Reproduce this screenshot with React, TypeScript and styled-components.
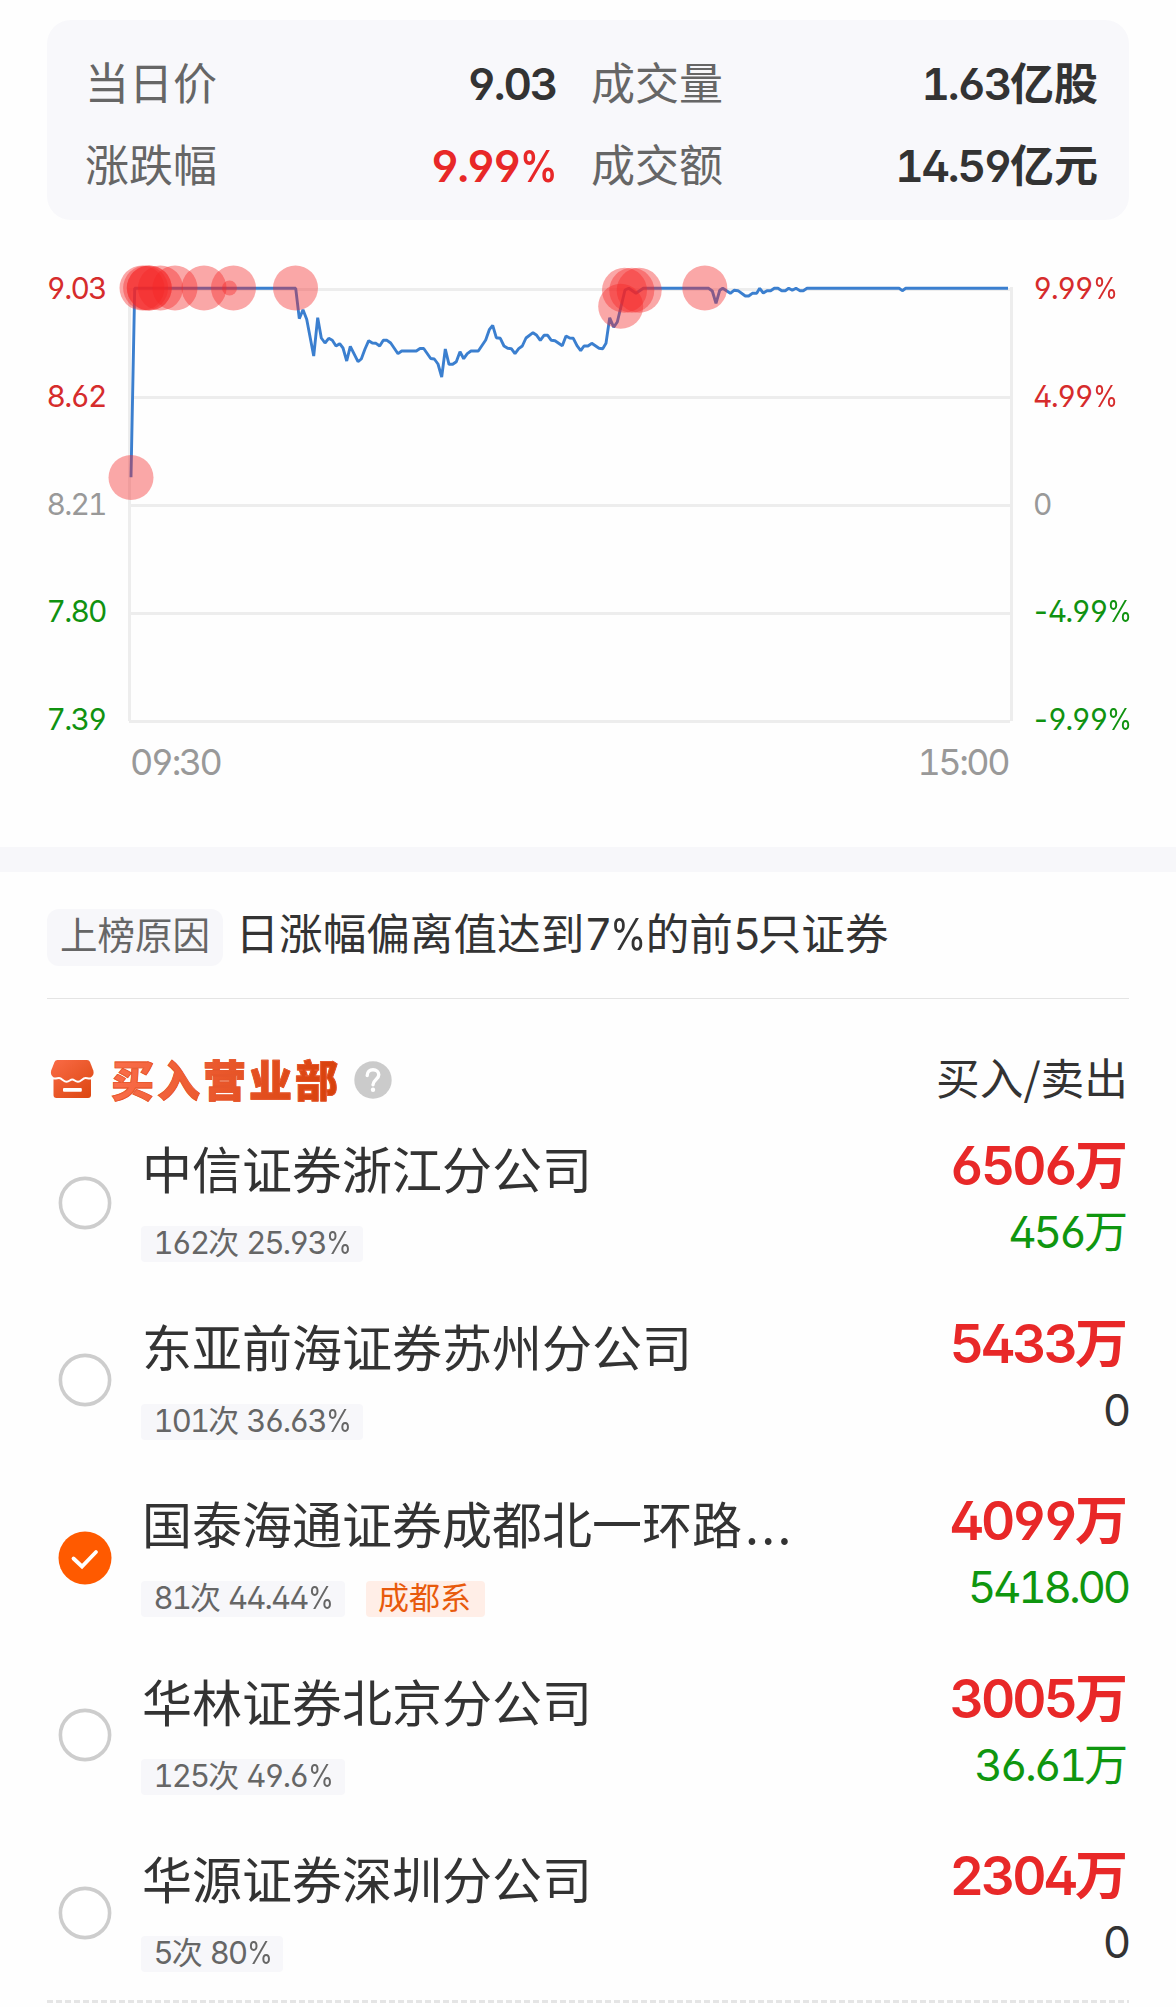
import React from "react";
import styled, { createGlobalStyle } from "styled-components";

const RED = "#e82828";
const GREEN = "#0f960f";
const INK = "#333333";
const MUTED = "#666666";
const FAINT = "#999999";

const GlobalStyle = createGlobalStyle`
  * { box-sizing: border-box; }
  body {
    margin: 0;
    background: #fdfdfe;
    font-family: "Noto Sans CJK SC", sans-serif;
    color: ${INK};
  }
`;

const Page = styled.main`
  width: 1176px;
  height: 2007px;
  overflow: hidden;
  display: flex;
  flex-direction: column;
  background: #fefefe;

  > * {
    flex: none;
  }
`;

const Latin = styled.span`
  font-family: "Inter", "Noto Sans CJK SC", sans-serif;
  font-feature-settings: "tnum", "cv02", "cv03", "cv04";
  letter-spacing: -0.06em;
`;

const Minus = styled(Latin)`
  margin: 0 -0.04em 0 -0.06em;
`;

const Percent = styled(Latin)`
  display: inline-block;
  letter-spacing: 0;
  transform: scaleX(0.85);
  transform-origin: 0 50%;
  margin: 0 -0.14em 0 0.02em;
`;

/* Figures use a latin face, the rest keeps the Chinese one. */
function Mixed({ text }: { text: string }) {
  const parts = text.split(/([0-9.:]+|%|-)/).filter(Boolean);
  return (
    <>
      {parts.map((part, i) => {
        if (part === "%") return <Percent key={i}>%</Percent>;
        if (part === "-") return <Minus key={i}>-</Minus>;
        return /^[0-9.:]/.test(part) ? <Latin key={i}>{part}</Latin> : part;
      })}
    </>
  );
}

const Summary = styled.section`
  margin: 20px 47px 0;
  height: 200px;
  padding: 20px 31px 0 38px;
  border-radius: 24px;
  background: #f8f8fb;
  display: grid;
  grid-template-columns: 471px 507px;
  column-gap: 35px;
  grid-auto-rows: 82px;
  font-size: 44px;
  line-height: 82px;
`;

const Stat = styled.div`
  display: flex;
  justify-content: space-between;
  white-space: nowrap;
`;

const StatLabel = styled.span`
  color: ${MUTED};
`;

const StatValue = styled.span<{ $color?: string }>`
  font-weight: 600;
  color: ${(p) => p.$color ?? INK};

  ${Latin} {
    letter-spacing: -0.05em;
  }

  ${Percent} {
    letter-spacing: 0;
    margin-right: -0.19em;
  }
`;

const ChartArea = styled.section`
  margin: 50px 0 0 47px;
  height: 467px;
  display: grid;
  grid-template-columns: 81px 886px 115px;
`;

const Scale = styled.div<{ $inset?: number }>`
  display: flex;
  flex-direction: column;
  justify-content: space-between;
  margin: -2px 0 0 -0.5px;
  padding-left: ${(p) => p.$inset ?? 0}px;
  font-size: 30px;
  line-height: 36px;
  white-space: nowrap;
`;

const Tick = styled.span<{ $color: string }>`
  color: ${(p) => p.$color};
`;

const Plot = styled.svg`
  display: block;
  overflow: visible;
`;

const TimeAxis = styled.div`
  margin: 1px 168px 0 130px;
  height: 109px;
  display: flex;
  justify-content: space-between;
  font-size: 36px;
  line-height: 48px;
  color: ${FAINT};

  ${Latin} {
    letter-spacing: -0.07em;
  }
`;

const Band = styled.div`
  height: 25px;
  background: #f7f7fa;
`;

const Reason = styled.section`
  margin: 0 47px;
  height: 127px;
  padding-top: 37px;
  display: flex;
  align-items: flex-start;
  border-bottom: 1px solid #e4e4e4;
`;

const ReasonTag = styled.span`
  width: 176px;
  height: 57px;
  border-radius: 12px;
  background: #f7f7fa;
  color: ${MUTED};
  font-size: 37.5px;
  line-height: 48px;
  text-align: center;
`;

const ReasonText = styled.span`
  margin-left: 12.5px;
  font-size: 43.6px;
  line-height: 45px;
  white-space: nowrap;

  ${Latin} {
    letter-spacing: -0.08em;
  }

  ${Percent} {
    letter-spacing: 0;
    margin-right: -0.16em;
  }
`;

const ListHeader = styled.header`
  margin: 0 47px;
  height: 130px;
  padding-top: 30px;
  display: flex;
  align-items: center;
`;

const Title = styled.h2`
  margin: -2px 0 0 14px;
  font-size: 43px;
  line-height: 50px;
  letter-spacing: 3px;
  font-weight: 900;
  color: transparent;
  -webkit-text-stroke: 0.8px #e6552a;
  background: linear-gradient(100deg, #fb6e4b, #d63f08);
  background-clip: text;
  -webkit-background-clip: text;
`;

const Help = styled.svg`
  margin: 2px 0 0 13px;
`;

const Columns = styled.span`
  margin: -6px 0 0 auto;
  padding-right: 1px;
  font-size: 43.7px;
  line-height: 50px;
`;

const List = styled.section`
  margin: 0 47px;
  display: flex;
  flex-direction: column;
  gap: 17px;
`;

const Row = styled.article`
  height: 160.5px;
  display: grid;
  grid-template-columns: 94px 1fr auto;
`;

const Check = styled.svg`
  margin: 46.5px 0 0 10.5px;
`;

const Branch = styled.div`
  display: flex;
  flex-direction: column;
`;

const Name = styled.span`
  margin: 8px 0 0 1px;
  font-size: 50px;
  line-height: 60px;
  white-space: nowrap;
`;

const Dots = styled.span`
  margin-left: 3px;
  letter-spacing: 2.3px;
`;

const Tags = styled.div`
  margin-top: 29px;
  display: flex;
  gap: 21px;
`;

const Tag = styled.span<{ $hot?: boolean }>`
  height: 36px;
  padding: 0 ${(p) => (p.$hot ? 14 : 10.5)}px 0 ${(p) => (p.$hot ? 12.5 : 12.5)}px;
  border-radius: 4px;
  font-size: 31px;
  line-height: 30px;
  white-space: nowrap;
  background: ${(p) => (p.$hot ? "#ffeee7" : "#f7f7fa")};
  color: ${(p) => (p.$hot ? "#e85a0c" : MUTED)};
`;

const Amounts = styled.div`
  display: flex;
  flex-direction: column;
  align-items: flex-end;
  padding-right: 1px;
`;

const Buy = styled.span`
  margin-top: 2px;
  font-size: 53px;
  line-height: 62px;
  font-weight: 600;
  color: ${RED};

  ${Latin} {
    letter-spacing: -0.056em;
  }
`;

const Sell = styled.span<{ $zero: boolean }>`
  margin-top: 5px;
  font-size: 44px;
  line-height: 54px;
  color: ${(p) => (p.$zero ? INK : GREEN)};

  ${Latin} {
    letter-spacing: -0.074em;
  }
`;

const Dashes = styled.div`
  margin: 0.5px 47px 0;
  height: 3px;
  background: repeating-linear-gradient(90deg, #e5e5e5 0 6px, transparent 6px 9px);
`;

const stats = [
  { label: "当日价", value: "9.03" },
  { label: "成交量", value: "1.63亿股" },
  { label: "涨跌幅", value: "9.99%", color: RED },
  { label: "成交额", value: "14.59亿元" },
];

const tickColors = ["#d62c2c", "#d62c2c", FAINT, "#109210", "#109210"];
const prices = ["9.03", "8.62", "8.21", "7.80", "7.39"];
const percents = ["9.99%", "4.99%", "0", "-4.99%", "-9.99%"];

const priceLine =
  "131,477.3 134.7,288.3 295.7,288.3 299.3,318.7 303,309.7 306.7,319.3 313.7,356 317.7,317.7 321.3,338 325,343 328.7,338.3 332.3,340.3 336,346 339.7,343.7 343,348 346.7,361 350.3,346.3 358,361.7 361.3,359 365,349 368.7,340.7 372.3,343 376,343.3 379.7,346 383.3,340.3 387,340.3 390.7,343 398,353.7 401.7,351 416.3,351 420,348.5 423.7,348.5 430.7,358.5 434.3,359 438,364 441.7,377 445.3,349 449,364.3 452.7,364.3 456.3,361.7 460,351.7 463.7,358.7 467.3,353.7 471,351 478.3,351 485.7,340 489.3,329.7 492.7,325.3 496.3,337.7 500.3,338.3 504,346 507.7,348.3 511.3,348.7 515,353.7 518.7,348.7 522.3,346 526,338 533,332.7 536.7,335.3 540.3,340.3 544,335.3 547.7,335.3 551.3,340.3 555,340.7 562.3,345.7 566,336 569.7,338 573.3,338.3 577,345.7 580.7,350.7 584,346 588,346 591.7,343.3 599,348.3 602.7,348.7 606,343.3 609.7,317.7 613.7,327.3 617.3,322 625,290 628.7,288.3 636,293.3 643.3,288.3 708.7,288.3 712.3,291 716,303.3 719.7,290.3 722.7,288.3 730.3,293.3 734,290.3 738,290.7 745.3,296 748.7,296 752.3,293.3 756.7,293.3 759.7,288.3 763.3,293 767,290.7 770.7,290.7 774.3,288.3 778,288.3 781.7,290.7 785.3,290.7 788.7,288.3 792.3,290.3 796,288.3 800,290.7 803.3,290.7 807,288.3 899.3,288.3 902.3,290.7 905.7,288.3 1008,288.3";

const trades: [number, number, number][] = [
  [131, 477.5, 22.5],
  [142, 288, 22.5],
  [145.6, 288, 22.5],
  [149.3, 288, 22.5],
  [149.3, 288, 22.5],
  [160.5, 288, 22.5],
  [175, 288, 22.5],
  [204, 288, 22.5],
  [233.5, 288, 22.5],
  [229.5, 288, 7.5],
  [295.5, 288, 22.5],
  [620.7, 306.3, 22.5],
  [624.5, 290.3, 22.5],
  [631.8, 290.3, 22.5],
  [639.2, 290.3, 22.5],
  [704.8, 288, 22.5],
];

const branches = [
  { name: "中信证券浙江分公司", stat: "162次 25.93%", buy: "6506万", sell: "456万" },
  { name: "东亚前海证券苏州分公司", stat: "101次 36.63%", buy: "5433万", sell: "0" },
  { name: "国泰海通证券成都北一环路", cut: true, stat: "81次 44.44%", group: "成都系", buy: "4099万", sell: "5418.00", checked: true },
  { name: "华林证券北京分公司", stat: "125次 49.6%", buy: "3005万", sell: "36.61万" },
  { name: "华源证券深圳分公司", stat: "5次 80%", buy: "2304万", sell: "0" },
];

function Shop() {
  return (
    <svg width="50" height="44" viewBox="0 0 50 44">
      <defs>
        <linearGradient id="shop" gradientUnits="userSpaceOnUse" x1="8" y1="2" x2="40" y2="42">
          <stop offset="0" stopColor="#f96a45" />
          <stop offset="1" stopColor="#dd4812" />
        </linearGradient>
      </defs>
      <path
        d="M10.500 3H40Q42.200 3 43 5L46.300 13.500C47.500 17.500 45 21 40.500 21H10C5.500 21 3 17.500 4.200 13.500L7.500 5Q8.300 3 10.500 3Z"
        fill="url(#shop)"
      />
      <path d="M6.500 20H44V38Q44 41 41 41H9.500Q6.500 41 6.500 38Z" fill="url(#shop)" />
      <path
        d="M3 20.800C8 22.200 10 21 12 21C15 21 16.500 24.800 19.500 24.800C22.500 24.800 23 22.500 25.200 22.500C27.500 22.500 28 24.800 31 24.800C34 24.800 35.500 21 38.500 21C40.500 21 42.500 22.200 47.500 20.800"
        fill="none"
        stroke="#fefefe"
        strokeWidth="2"
      />
      <rect x="16" y="31" width="18.800" height="3.800" rx="1" fill="#fff" />
    </svg>
  );
}

function CheckMark({ on }: { on?: boolean }) {
  return (
    <Check width="54" height="54" viewBox="0 0 54 54">
      {on ? (
        <>
          <circle cx="27" cy="27" r="26.500" fill="#ff5a00" />
          <path d="M15.500 27.500L24 35.500L38 21" fill="none" stroke="#fff" strokeWidth="3.800" strokeLinecap="round" />
        </>
      ) : (
        <circle cx="27" cy="27" r="24.600" fill="#fff" stroke="#cdcdcd" strokeWidth="3.600" />
      )}
    </Check>
  );
}

export default function App() {
  return (
    <>
      <GlobalStyle />
      <Page>
        <Summary>
          {stats.map((s) => (
            <Stat key={s.label}>
              <StatLabel>{s.label}</StatLabel>
              <StatValue $color={s.color}>
                <Mixed text={s.value} />
              </StatValue>
            </Stat>
          ))}
        </Summary>

        <ChartArea>
          <Scale>
            {prices.map((p, i) => (
              <Tick key={p} $color={tickColors[i]}>
                <Mixed text={p} />
              </Tick>
            ))}
          </Scale>
          <Plot width="886" height="467" viewBox="128 270 886 467">
            <g stroke="#ededed" strokeWidth="3">
              {[289.5, 397.5, 505.5, 613.5, 721.5].map((y) => (
                <line key={y} x1="129" x2="1010" y1={y} y2={y} />
              ))}
              <line x1="129.500" x2="129.500" y1="288" y2="721" />
              <line x1="1011.500" x2="1011.500" y1="287" y2="721" />
            </g>
            <polyline points={priceLine} fill="none" stroke="#3b7fcf" strokeWidth="2.900" strokeLinejoin="bevel" />
            {trades.map(([x, y, r], i) => (
              <circle key={i} cx={x} cy={y} r={r} fill="#f42626" fillOpacity="0.4" />
            ))}
          </Plot>
          <Scale $inset={19.5}>
            {percents.map((p, i) => (
              <Tick key={p} $color={tickColors[i]}>
                <Mixed text={p} />
              </Tick>
            ))}
          </Scale>
        </ChartArea>
        <TimeAxis>
          <Mixed text="09:30" />
          <Mixed text="15:00" />
        </TimeAxis>

        <Band />

        <Reason>
          <ReasonTag>上榜原因</ReasonTag>
          <ReasonText>
            <Mixed text="日涨幅偏离值达到7%的前5只证券" />
          </ReasonText>
        </Reason>

        <ListHeader>
          <Shop />
          <Title>买入营业部</Title>
          <Help width="38" height="38" viewBox="0 0 38 38">
            <circle cx="19" cy="19" r="18.700" fill="#cbcbcb" />
            <path d="M13.200 14.500C13.200 10.900 15.700 8.700 19 8.700C22.400 8.700 24.800 10.900 24.800 13.800C24.800 18.300 19 18.600 19 23.700" fill="none" stroke="#fff" strokeWidth="3.400" strokeLinecap="round" />
            <circle cx="19" cy="28.800" r="2.200" fill="#fff" />
          </Help>
          <Columns>买入/卖出</Columns>
        </ListHeader>

        <List>
          {branches.map((b) => (
            <Row key={b.name}>
              <CheckMark on={b.checked} />
              <Branch>
                <Name>
                  {b.name}
                  {b.cut && <Dots>...</Dots>}
                </Name>
                <Tags>
                  <Tag>
                    <Mixed text={b.stat} />
                  </Tag>
                  {b.group && <Tag $hot>{b.group}</Tag>}
                </Tags>
              </Branch>
              <Amounts>
                <Buy>
                  <Mixed text={b.buy} />
                </Buy>
                <Sell $zero={b.sell === "0"}>
                  <Mixed text={b.sell} />
                </Sell>
              </Amounts>
            </Row>
          ))}
        </List>
        <Dashes />
      </Page>
    </>
  );
}
